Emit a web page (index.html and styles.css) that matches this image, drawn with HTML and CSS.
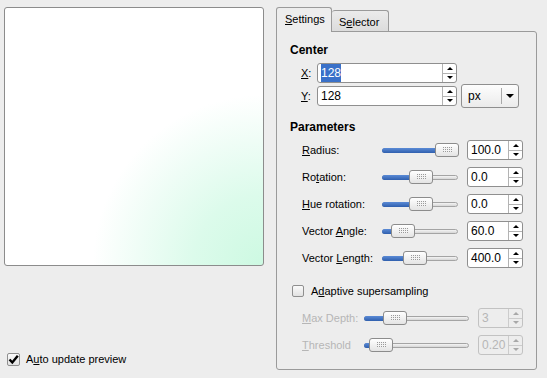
FILE: index.html
```html
<!DOCTYPE html>
<html lang="en">
<head>
    <meta charset="UTF-8">
    <title>Supernova</title>
    <link rel="stylesheet" href="styles.css">
</head>
<body>
    <div class="dialog">
        <!-- Preview column -->
        <div class="left">
            <div class="preview"></div>
            <div class="check auto">
                <span class="box"><svg width="11" height="11" viewBox="0 0 11 11"><path d="M1.5 5.5 L4.3 8.5 L9.8 1.8" fill="none" stroke="#000" stroke-width="2.4"/></svg></span>
                <span>A<u>u</u>to update preview</span>
            </div>
        </div>

        <!-- Settings column -->
        <div class="right">
            <div class="tabs">
                <div class="tab active"><span><u>S</u>ettings</span></div>
                <div class="tab other"><span>S<u>e</u>lector</span></div>
            </div>
            <div class="panel">
                <div class="heading">Center</div>
                <div class="center-grid">
                    <span class="lbl"><u>X</u>:</span>
                    <div class="spin">
                        <span class="val"><span class="sel">128</span></span>
                        <span class="btns"><span><i class="up"></i></span><span><i class="down"></i></span></span>
                    </div>
                    <span></span>
                    <span class="lbl"><u>Y</u>:</span>
                    <div class="spin">
                        <span class="val">128</span>
                        <span class="btns"><span><i class="up"></i></span><span><i class="down"></i></span></span>
                    </div>
                    <div class="combo">
                        <span class="combo-text">px</span>
                        <span class="combo-btn"><i class="down big"></i></span>
                    </div>
                </div>

                <div class="heading params-head">Parameters</div>
                <div class="param-grid">
                    <span class="lbl"><u>R</u>adius:</span>
                    <div class="slider"><div class="fill" style="width:64px"></div><div class="handle" style="left:52px"></div></div>
                    <div class="spin"><span class="val">100.0</span><span class="btns"><span><i class="up"></i></span><span><i class="down"></i></span></span></div>

                    <span class="lbl">Ro<u>t</u>ation:</span>
                    <div class="slider"><div class="fill" style="width:38px"></div><div class="handle" style="left:26px"></div></div>
                    <div class="spin"><span class="val">0.0</span><span class="btns"><span><i class="up"></i></span><span><i class="down"></i></span></span></div>

                    <span class="lbl"><u>H</u>ue rotation:</span>
                    <div class="slider"><div class="fill" style="width:38px"></div><div class="handle" style="left:26px"></div></div>
                    <div class="spin"><span class="val">0.0</span><span class="btns"><span><i class="up"></i></span><span><i class="down"></i></span></span></div>

                    <span class="lbl">Vector <u>A</u>ngle:</span>
                    <div class="slider"><div class="fill" style="width:20px"></div><div class="handle" style="left:8px"></div></div>
                    <div class="spin"><span class="val">60.0</span><span class="btns"><span><i class="up"></i></span><span><i class="down"></i></span></span></div>

                    <span class="lbl">Vector <u>L</u>ength:</span>
                    <div class="slider"><div class="fill" style="width:32px"></div><div class="handle" style="left:20px"></div></div>
                    <div class="spin"><span class="val">400.0</span><span class="btns"><span><i class="up"></i></span><span><i class="down"></i></span></span></div>
                </div>

                <div class="check adaptive">
                    <span class="box"></span>
                    <span>A<u>d</u>aptive supersampling</span>
                </div>

                <div class="param-grid disabled">
                    <span class="lbl"><u>M</u>ax Depth:</span>
                    <div class="slider"><div class="fill" style="width:30px"></div><div class="handle" style="left:18px"></div></div>
                    <div class="spin"><span class="val">3</span><span class="btns"><span><i class="up"></i></span><span><i class="down"></i></span></span></div>

                    <span class="lbl"><u>T</u>hreshold</span>
                    <div class="slider"><div class="fill" style="width:16px"></div><div class="handle" style="left:4px"></div></div>
                    <div class="spin"><span class="val">0.20</span><span class="btns"><span><i class="up"></i></span><span><i class="down"></i></span></span></div>
                </div>
            </div>
        </div>
    </div>
</body>
</html>
```

FILE: styles.css
```css
body {
    margin: 0;
    background: #ededed;
    font-family: "Liberation Sans", Arial, sans-serif;
    font-size: 11px;
    color: #000;
}
.dialog {
    display: flex;
    gap: 12px;
    padding: 7px 0 0 4px;
    width: 547px;
    height: 378px;
    box-sizing: border-box;
}

/* left side */
.left {
    width: 260px;
    display: flex;
    flex-direction: column;
}
.preview {
    height: 259px;
    box-sizing: border-box;
    border: 1px solid #8c8c8c;
    border-radius: 3px;
    background: radial-gradient(circle at 100% 100%, #cdf9e2 0, #dcfbeb 70px, #effdf6 125px, #ffffff 170px);
}
.check {
    display: flex;
    align-items: center;
    gap: 6px;
    line-height: 13px;
}
.box {
    width: 12px;
    height: 12px;
    box-sizing: border-box;
    border: 1px solid #8f8f8f;
    border-radius: 2px;
    background: linear-gradient(#fafafa, #e2e2e2);
    display: flex;
    align-items: center;
    justify-content: center;
}
.auto {
    margin: 87px 0 0 3px;
}
.auto .box {
    width: 13px;
    height: 13px;
}

/* right side */
.right {
    width: 261px;
    display: flex;
    flex-direction: column;
}
.tabs {
    display: flex;
    height: 24px;
    align-items: flex-end;
}
.tab {
    box-sizing: border-box;
    border: 1px solid #9a9a9a;
    border-bottom: none;
    border-radius: 3px 3px 0 0;
    display: flex;
    align-items: center;
}
.tab.active {
    width: 56px;
    height: 25px;
    margin-bottom: -1px;
    padding: 0 0 2px 8px;
    background: #ededed;
    position: relative;
    z-index: 1;
}
.tab.other {
    width: 57px;
    height: 21px;
    padding: 1px 0 0 7px;
    border-left: none;
    background: linear-gradient(#ebebeb, #dcdcdc);
}
.panel {
    height: 339px;
    box-sizing: border-box;
    border: 1px solid #9a9a9a;
    border-radius: 0 3px 3px 3px;
    padding: 10px 0 0 13px;
}
.heading {
    font-weight: bold;
    font-size: 12px;
    line-height: 16px;
    height: 16px;
}
.params-head {
    margin-top: 13px;
}
.lbl {
    line-height: 20px;
    white-space: nowrap;
}

/* center rows */
.center-grid {
    display: grid;
    grid-template-columns: 16px 140px 62px;
    grid-template-rows: 20px 20px;
    row-gap: 3px;
    margin: 5px 0 0 11px;
}
.combo {
    margin: -2px 0 -2px 4px;
    height: 24px;
    box-sizing: border-box;
    border: 1px solid #8f8f8f;
    border-radius: 3px;
    background: linear-gradient(#fdfdfd, #ebebeb);
    display: flex;
}
.combo-text {
    flex: 1;
    display: flex;
    align-items: center;
    padding-left: 6px;
    font-size: 12px;
}
.combo-btn {
    width: 16px;
    margin: 3px 0;
    border-left: 1px solid #a8a8a8;
    display: flex;
    align-items: center;
    justify-content: center;
}

/* spin boxes */
.spin {
    display: flex;
    height: 20px;
    box-sizing: border-box;
    border: 1px solid #8f8f8f;
    border-radius: 3px;
    background: #fff;
}
.val {
    flex: 1;
    display: flex;
    align-items: center;
    padding-left: 3px;
    font-size: 12px;
}
.sel {
    background: #3a71c9;
    color: #fff;
    padding: 2px 0;
}
.btns {
    width: 13px;
    border-left: 1px solid #b3b3b3;
    display: flex;
    flex-direction: column;
}
.btns span {
    flex: 1;
    display: flex;
    align-items: center;
    justify-content: center;
}
.btns span + span {
    border-top: 1px solid #b3b3b3;
}
.up, .down {
    width: 0;
    height: 0;
    border-left: 3px solid transparent;
    border-right: 3px solid transparent;
}
.up {
    border-bottom: 3px solid #000;
}
.down {
    border-top: 3px solid #000;
}
.down.big {
    border-left-width: 4px;
    border-right-width: 4px;
    border-top-width: 4px;
}

/* parameter rows */
.param-grid {
    display: grid;
    grid-template-columns: 71px 76px 56px;
    grid-auto-rows: 20px;
    column-gap: 9px;
    row-gap: 7px;
    margin: 5px 0 0 12px;
}
.slider {
    position: relative;
    height: 5px;
    align-self: center;
    box-sizing: border-box;
    border: 1px solid #a4a4a4;
    border-radius: 3px;
    background: linear-gradient(#f4f4f4, #d6d6d6);
}
.fill {
    height: 5px;
    margin: -1px 0 0 -1px;
    border-radius: 3px 0 0 3px;
    background: linear-gradient(#5b8bd6, #2f5fae);
}
.handle {
    position: absolute;
    top: -6px;
    width: 24px;
    height: 14px;
    box-sizing: border-box;
    border: 1px solid #8c8c8c;
    border-radius: 3px;
    background: linear-gradient(#ffffff, #e4e4e4);
}
/* dotted grip */
.handle::after {
    content: "";
    position: absolute;
    left: 7px;
    top: 3px;
    width: 9px;
    height: 5px;
    background:
        linear-gradient(90deg, transparent 1px, #f3f3f3 1px) 0 0 / 2px 2px,
        linear-gradient(transparent 1px, #f3f3f3 1px) 0 0 / 2px 2px,
        #9a9a9a;
}

.adaptive {
    margin: 15px 0 0 2px;
    height: 16px;
    gap: 7px;
}
.param-grid.disabled {
    grid-template-columns: 53px 105px 45px;
    margin-top: 9px;
}
.disabled .lbl {
    color: #b6b6b6;
}
.disabled .spin {
    background: #ededed;
    border-color: #c2c2c2;
    color: #b6b6b6;
}
.disabled .btns {
    border-color: #cccccc;
}
.disabled .btns span + span {
    border-color: #cccccc;
}
.disabled .up {
    border-bottom-color: #a8a8a8;
}
.disabled .down {
    border-top-color: #a8a8a8;
}
```
